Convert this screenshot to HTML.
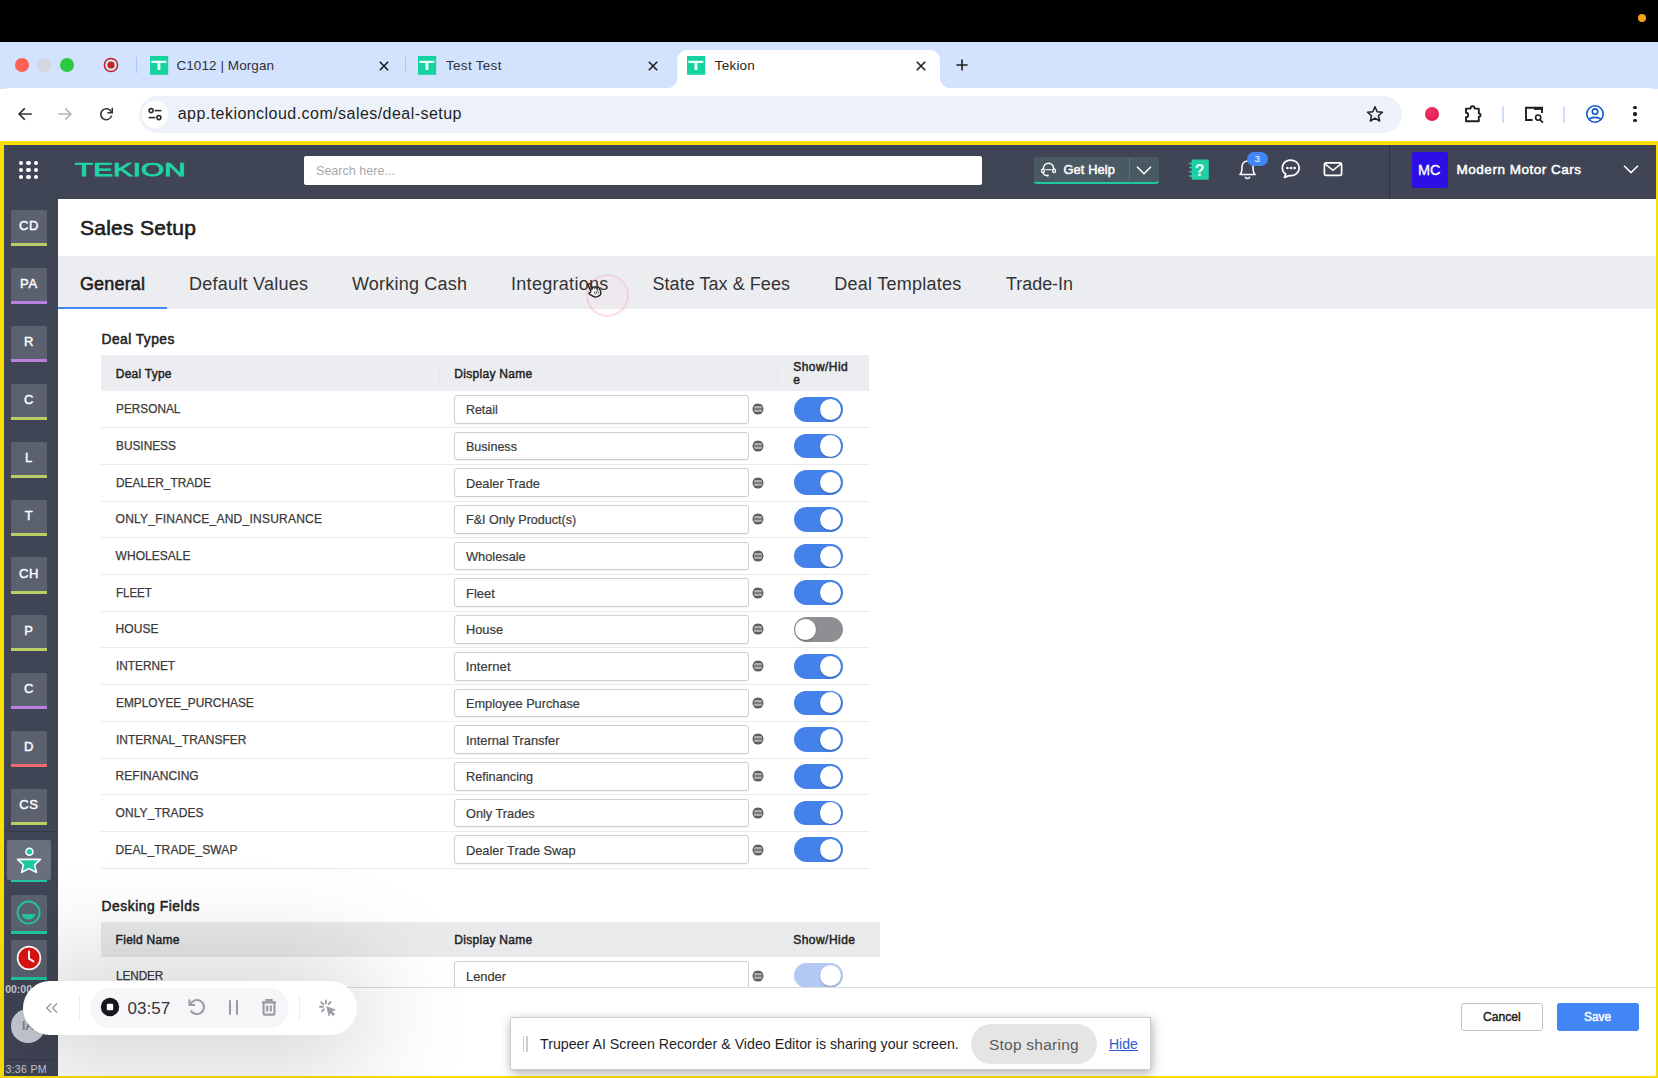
<!DOCTYPE html>
<html lang="en">
<head>
<meta charset="utf-8">
<title>Tekion</title>
<style>
html,body{margin:0;padding:0}
body{width:1658px;height:1078px;position:relative;overflow:hidden;background:#fff;font-family:"Liberation Sans",sans-serif;}
.a{position:absolute}
.t{position:absolute;white-space:pre;}
svg{position:absolute;overflow:visible}
</style>
</head>
<body>
<div class="a" style="left:0px;top:0px;width:1658px;height:42px;background:#000;"></div>
<div class="a" style="left:1638.2px;top:14px;width:8px;height:8px;border-radius:50%;background:#f5a21a"></div>
<div class="a" style="left:0px;top:42px;width:1658px;height:47px;background:#d3e3fd;"></div>
<div class="a" style="left:14.7px;top:58px;width:14px;height:14px;border-radius:50%;background:#fe5f57"></div>
<div class="a" style="left:37px;top:58px;width:14px;height:14px;border-radius:50%;background:#d4d8de"></div>
<div class="a" style="left:59.8px;top:58px;width:14px;height:14px;border-radius:50%;background:#2bc840"></div>
<svg style="left:102.7px;top:57px" width="16" height="16" viewBox="-8 -8 16 16"><circle r="6.6" fill="none" stroke="#c5221f" stroke-width="1.5"/><circle r="3.6" fill="#c5221f"/></svg>
<div class="a" style="left:136px;top:57px;width:1.4px;height:16px;background:#a8c7fa;"></div>
<div class="a" style="left:404.8px;top:57px;width:1.4px;height:16px;background:#a8c7fa;"></div>
<svg style="left:149.5px;top:56.3px" width="18.2" height="18.8" viewBox="0 0 18.2 18.8"><rect width="18.2" height="18.8" fill="#15d2a0"/><path d="M1.4 4.7h15v2.3H10.4V13.9H7.5V7H1.4z" fill="#eafff8"/></svg>
<svg style="left:418.2px;top:56.3px" width="18.2" height="18.8" viewBox="0 0 18.2 18.8"><rect width="18.2" height="18.8" fill="#15d2a0"/><path d="M1.4 4.7h15v2.3H10.4V13.9H7.5V7H1.4z" fill="#eafff8"/></svg>
<svg style="left:376px;top:57.7px" width="16" height="16" viewBox="-8 -8 16 16"><path d="M-4.2 -4.2L4.2 4.2M4.2 -4.2L-4.2 4.2" stroke="#1f1f1f" stroke-width="1.6" fill="none"/></svg>
<svg style="left:644.7px;top:57.7px" width="16" height="16" viewBox="-8 -8 16 16"><path d="M-4.2 -4.2L4.2 4.2M4.2 -4.2L-4.2 4.2" stroke="#1f1f1f" stroke-width="1.6" fill="none"/></svg>
<svg style="left:0;top:0" width="1658" height="90" viewBox="0 0 1658 90"><path d="M665.4 88.5 C672 88.5 677.4 84 677.4 78 V60 C677.4 54.5 681.9 50 687.4 50 H930 C935.5 50 940 54.5 940 60 V78 C940 84 945.4 88.5 952 88.5 Z" fill="#fff"/></svg>
<svg style="left:687.0px;top:56.3px" width="18.2" height="18.8" viewBox="0 0 18.2 18.8"><rect width="18.2" height="18.8" fill="#15d2a0"/><path d="M1.4 4.7h15v2.3H10.4V13.9H7.5V7H1.4z" fill="#eafff8"/></svg>
<svg style="left:913.3px;top:57.7px" width="16" height="16" viewBox="-8 -8 16 16"><path d="M-4.2 -4.2L4.2 4.2M4.2 -4.2L-4.2 4.2" stroke="#1f1f1f" stroke-width="1.6" fill="none"/></svg>
<svg style="left:954px;top:57px" width="16" height="16" viewBox="-8 -8 16 16"><path d="M-5.6 0H5.6M0 -5.6V5.6" stroke="#1f1f1f" stroke-width="1.6" fill="none"/></svg>
<div class="a" style="left:0px;top:88px;width:1658px;height:54px;background:#fff;border-radius:9px 9px 0 0"></div>
<div class="a" style="left:138.6px;top:95.8px;width:1263px;height:37.2px;background:#edf2fa;border-radius:19px"></div>
<div class="a" style="left:141.6px;top:101.2px;width:26.6px;height:26.6px;border-radius:50%;background:#fff"></div>
<svg style="left:15px;top:104px" width="20" height="20" viewBox="-10 -10 20 20"><path d="M6.8 0H-5.6M-0.2 -5.6L-5.9 0L-0.2 5.6" stroke="#333" stroke-width="1.7" fill="none" stroke-linejoin="miter"/></svg>
<svg style="left:55px;top:104px" width="20" height="20" viewBox="-10 -10 20 20"><path d="M-6.8 0H5.6M0.2 -5.6L5.9 0L0.2 5.6" stroke="#b4b8be" stroke-width="1.7" fill="none"/></svg>
<svg style="left:97.2px;top:104.8px" width="18.4" height="18.4" viewBox="-10 -10 20 20"><path d="M5.6 -2.4A6 6 0 1 0 5.9 1.6" stroke="#333" stroke-width="1.7" fill="none"/><path d="M6.6 -7V-1.6H1.2" stroke="#333" stroke-width="1.7" fill="none"/></svg>
<svg style="left:144.8px;top:104.2px" width="20" height="20" viewBox="-10 -10 20 20"><g stroke="#2e2e2e" stroke-width="1.6" fill="none"><circle cx="-3.9" cy="-3.4" r="2"/><path d="M-0.4 -3.4H6.4"/><circle cx="3.9" cy="3.6" r="2"/><path d="M-6.4 3.6H0.4"/></g></svg>
<svg style="left:1365px;top:103.6px" width="20" height="20" viewBox="-10 -10 20 20"><path d="M0 -7.2L2.15 -2.3L7.5 -1.8L3.45 1.75L4.65 7L0 4.2L-4.65 7L-3.45 1.75L-7.5 -1.8L-2.15 -2.3Z" stroke="#1f1f1f" stroke-width="1.5" fill="none" stroke-linejoin="round"/></svg>
<div class="a" style="left:1424.7px;top:107px;width:14px;height:14px;border-radius:50%;background:radial-gradient(circle at 40% 35%,#f0356a,#db1048)"></div>
<svg style="left:1463.3px;top:104px" width="20" height="20" viewBox="-10 -10 20 20"><path d="M-7 -5.4H-2.4A2 2.3 0 0 1 1.6 -5.4H5.8V-0.6A1.7 1.7 0 0 1 5.8 2.8V7.2H-7V3.2A2.2 2.2 0 0 0 -7 -1.2Z" stroke="#1f1f1f" stroke-width="1.9" fill="none" stroke-linejoin="round"/></svg>
<div class="a" style="left:1502.2px;top:105.5px;width:1.6px;height:17px;background:#d3dff6;"></div>
<svg style="left:1523.7px;top:104px" width="20" height="20" viewBox="-10 -10 20 20"><g stroke="#1f1f1f" fill="none"><path d="M-1.4 6H-8V-6.2H8V-1" stroke-width="1.9"/><path d="M0 -5.4H7.6" stroke-width="2.6"/><circle cx="4.2" cy="3.6" r="2.6" stroke-width="1.6"/><path d="M6.2 5.8L9 8.6" stroke-width="1.7"/></g></svg>
<div class="a" style="left:1563px;top:105.5px;width:1.6px;height:17px;background:#d3dff6;"></div>
<svg style="left:1584.5px;top:104px" width="20" height="20" viewBox="-10 -10 20 20"><g stroke="#0b57d0" stroke-width="1.6" fill="none"><circle r="8.2"/><circle cy="-2.4" r="2.7"/><path d="M-5.8 5.6C-4 2.6 4 2.6 5.8 5.6"/></g></svg>
<div class="a" style="left:1633.4px;top:106.10000000000001px;width:3.2px;height:3.2px;border-radius:50%;background:#1f1f1f"></div>
<div class="a" style="left:1633.4px;top:112.4px;width:3.2px;height:3.2px;border-radius:50%;background:#1f1f1f"></div>
<div class="a" style="left:1633.4px;top:118.7px;width:3.2px;height:3.2px;border-radius:50%;background:#1f1f1f"></div>
<div class="a" style="left:0px;top:140.6px;width:1658px;height:937.4px;background:#fbde08;"></div>
<div class="a" style="left:3.7px;top:145px;width:1651.9px;height:930.6px;background:#fff;"></div>
<div class="a" style="left:3.7px;top:145px;width:1651.9px;height:53.6px;background:#404556;"></div>
<div class="a" style="left:3.7px;top:198.6px;width:53.9px;height:877px;background:#404556;"></div>
<div class="a" style="left:19.099999999999998px;top:160.6px;width:4.4px;height:4.4px;border-radius:50%;background:#fff"></div>
<div class="a" style="left:19.099999999999998px;top:167.79999999999998px;width:4.4px;height:4.4px;border-radius:50%;background:#fff"></div>
<div class="a" style="left:19.099999999999998px;top:175.0px;width:4.4px;height:4.4px;border-radius:50%;background:#fff"></div>
<div class="a" style="left:26.299999999999997px;top:160.6px;width:4.4px;height:4.4px;border-radius:50%;background:#fff"></div>
<div class="a" style="left:26.299999999999997px;top:167.79999999999998px;width:4.4px;height:4.4px;border-radius:50%;background:#fff"></div>
<div class="a" style="left:26.299999999999997px;top:175.0px;width:4.4px;height:4.4px;border-radius:50%;background:#fff"></div>
<div class="a" style="left:33.5px;top:160.6px;width:4.4px;height:4.4px;border-radius:50%;background:#fff"></div>
<div class="a" style="left:33.5px;top:167.79999999999998px;width:4.4px;height:4.4px;border-radius:50%;background:#fff"></div>
<div class="a" style="left:33.5px;top:175.0px;width:4.4px;height:4.4px;border-radius:50%;background:#fff"></div>
<div class="a" style="left:304.3px;top:156px;width:677.3px;height:29px;background:#fff;border-radius:2px"></div>
<div class="a" style="left:1034px;top:157px;width:125px;height:27px;background:#4a5a62;border-radius:3px;border-bottom:2px solid #1fc8a0;box-sizing:border-box"></div>
<div class="a" style="left:1129.2px;top:158px;width:1px;height:23px;background:#5e6c73;"></div>
<svg style="left:1040.2px;top:160.8px" width="17" height="17" viewBox="-9 -9 18 18"><g stroke="#fff" stroke-width="1.5" fill="none"><path d="M-5.4 -0.6V-1.2A5.4 5.4 0 0 1 5.4 -1.2V-0.6"/><path d="M-5.6 3.4C-5.4 5.6 -4 6.4 -1.4 6.4"/><path d="M-3.4 0.2H3.4" stroke-width="1.1"/></g><ellipse cx="-5.9" cy="1.4" rx="2.2" ry="2.7" fill="#fff"/><ellipse cx="5.9" cy="1.4" rx="2.2" ry="2.7" fill="#fff"/><ellipse cx="-5.9" cy="1.4" rx="0.8" ry="1.2" fill="#4b5963"/><ellipse cx="5.9" cy="1.4" rx="0.8" ry="1.2" fill="#4b5963"/><circle cx="-0.8" cy="6.4" r="1.2" fill="#fff"/></svg>
<svg style="left:1136px;top:161.5px" width="16" height="16" viewBox="-8 -8 16 16"><path d="M-7 -3.2L0 3.7L7 -3.2" stroke="#fff" stroke-width="1.6" fill="none"/></svg>
<svg style="left:1187px;top:159px" width="23" height="22" viewBox="0 0 23 22"><rect x="4.6" y="0.4" width="17.2" height="20.4" rx="1.4" fill="#20cfa4"/><path d="M2 4.4H5M2 8.6H5M2 12.8H5M2 17H5" stroke="#20cfa4" stroke-width="1.5"/></svg>
<svg style="left:1236.8px;top:156.8px" width="21" height="23" viewBox="-11 -12 22 24"><g stroke="#fff" stroke-width="1.6" fill="none" stroke-linejoin="round"><path d="M-8 6.4C-5.6 4.6 -5.8 1 -5.8 -2A5.8 5.8 0 0 1 5.8 -2C5.8 1 5.6 4.6 8 6.4Z"/><path d="M-2.4 8.6A2.5 2.5 0 0 0 2.4 8.6"/></g></svg>
<div class="a" style="left:1247px;top:151.6px;width:20.6px;height:14.2px;background:#4285f4;border-radius:7.1px"></div>
<svg style="left:1279.5px;top:157.4px" width="22" height="22" viewBox="-11 -11 22 22"><path d="M-5.2 6.2A8.4 7.8 0 1 1 -1.6 7.6L-6.6 9.4Z" stroke="#fff" stroke-width="1.7" fill="none" stroke-linejoin="round"/><circle cx="-3.6" cy="0" r="1.35" fill="#fff"/><circle cx="0" cy="0" r="1.35" fill="#fff"/><circle cx="3.6" cy="0" r="1.35" fill="#fff"/></svg>
<svg style="left:1322.2px;top:157.8px" width="22" height="22" viewBox="-11 -11 22 22"><rect x="-8.6" y="-6.2" width="17.2" height="12.6" rx="1.6" stroke="#fff" stroke-width="1.7" fill="none"/><path d="M-8 -5.2L0 1.4L8 -5.2" stroke="#fff" stroke-width="1.5" fill="none"/></svg>
<div class="a" style="left:1389px;top:145px;width:1.2px;height:53.6px;background:#2f3342;"></div>
<div class="a" style="left:1411.5px;top:151.8px;width:36.4px;height:36px;background:#2c0fe6;border-radius:3px"></div>
<svg style="left:1622px;top:161px" width="18" height="16" viewBox="-9 -8 18 16"><path d="M-7 -3.2L0 3.6L7 -3.2" stroke="#fff" stroke-width="1.5" fill="none"/></svg>
<div class="a" style="left:10.7px;top:210.3px;width:36.2px;height:36.2px;background:#5c6170;border-bottom:3px solid #b9cf63;box-sizing:border-box;border-radius:2px 2px 0 0"></div>
<div class="a" style="left:10.7px;top:268.15000000000003px;width:36.2px;height:36.2px;background:#5c6170;border-bottom:3px solid #b981de;box-sizing:border-box;border-radius:2px 2px 0 0"></div>
<div class="a" style="left:10.7px;top:326.0px;width:36.2px;height:36.2px;background:#5c6170;border-bottom:3px solid #b981de;box-sizing:border-box;border-radius:2px 2px 0 0"></div>
<div class="a" style="left:10.7px;top:383.85px;width:36.2px;height:36.2px;background:#5c6170;border-bottom:3px solid #b9cf63;box-sizing:border-box;border-radius:2px 2px 0 0"></div>
<div class="a" style="left:10.7px;top:441.70000000000005px;width:36.2px;height:36.2px;background:#5c6170;border-bottom:3px solid #b9cf63;box-sizing:border-box;border-radius:2px 2px 0 0"></div>
<div class="a" style="left:10.7px;top:499.55px;width:36.2px;height:36.2px;background:#5c6170;border-bottom:3px solid #b9cf63;box-sizing:border-box;border-radius:2px 2px 0 0"></div>
<div class="a" style="left:10.7px;top:557.4000000000001px;width:36.2px;height:36.2px;background:#5c6170;border-bottom:3px solid #b9cf63;box-sizing:border-box;border-radius:2px 2px 0 0"></div>
<div class="a" style="left:10.7px;top:615.25px;width:36.2px;height:36.2px;background:#5c6170;border-bottom:3px solid #b9cf63;box-sizing:border-box;border-radius:2px 2px 0 0"></div>
<div class="a" style="left:10.7px;top:673.1px;width:36.2px;height:36.2px;background:#5c6170;border-bottom:3px solid #b981de;box-sizing:border-box;border-radius:2px 2px 0 0"></div>
<div class="a" style="left:10.7px;top:730.95px;width:36.2px;height:36.2px;background:#5c6170;border-bottom:3px solid #ee6a6e;box-sizing:border-box;border-radius:2px 2px 0 0"></div>
<div class="a" style="left:10.7px;top:788.8px;width:36.2px;height:36.2px;background:#5c6170;border-bottom:3px solid #b9cf63;box-sizing:border-box;border-radius:2px 2px 0 0"></div>
<div class="a" style="left:4px;top:830.5px;width:53.6px;height:1px;background:#353a49;"></div>
<div class="a" style="left:6.8px;top:840.3px;width:44.6px;height:39.6px;background:#6a6f7d;border-radius:2px"></div>
<div class="a" style="left:10.7px;top:880px;width:36.2px;height:2.2px;background:#1fc8a0;"></div>
<svg style="left:15.8px;top:846px" width="26" height="32" viewBox="-13 -20 26 32"><path d="M-11.4 -6.6L11.4 -6.6L5.6 -1.2L7.4 6.4L0 2.6L-7.4 6.4L-5.6 -1.2Z" fill="#1fc8a0" stroke="#fff" stroke-width="1.6" stroke-linejoin="round"/><circle cx="0.4" cy="-14.2" r="3.5" fill="#1fc8a0" stroke="#fff" stroke-width="1.5"/></svg>
<div class="a" style="left:10.7px;top:895.4px;width:36.2px;height:38.6px;background:#5c6170;border-bottom:3px solid #1fc8a0;box-sizing:border-box;border-radius:2px 2px 0 0"></div>
<svg style="left:15.1px;top:898.9px" width="27.2" height="27.2" viewBox="-13 -13 26 26"><circle r="10.6" fill="none" stroke="#1fc8a0" stroke-width="1.7"/><path d="M-6.4 1.4H6.4A6.4 5.2 0 0 1 -6.4 1.4Z" fill="#1fc8a0"/></svg>
<div class="a" style="left:10.7px;top:940.4px;width:36.2px;height:39.4px;background:#5c6170;border-bottom:3px solid #1fc8a0;box-sizing:border-box;border-radius:2px 2px 0 0"></div>
<svg style="left:15.7px;top:945px" width="26" height="26" viewBox="-13 -13 26 26"><circle r="11.4" fill="#e01313" stroke="#fff" stroke-width="1.7"/><path d="M0 -6.4V0.6L4.4 3.4" stroke="#fff" stroke-width="2" fill="none" stroke-linecap="round"/></svg>
<div class="a" style="left:11.2px;top:1009px;width:33.6px;height:33.6px;border-radius:50%;background:#c9cdd7"></div>
<div class="a" style="left:4px;top:1059px;width:53.6px;height:1px;background:#353a49;"></div>
<div class="a" style="left:57.6px;top:256.2px;width:1598px;height:52.6px;background:#ecedf1;"></div>
<div class="a" style="left:57.6px;top:306.6px;width:109.8px;height:2.9px;background:#4285f4;"></div>
<div class="a" style="left:101px;top:355.4px;width:768px;height:35.8px;background:#ecedf0;"></div>
<div class="a" style="left:438.6px;top:364px;width:1px;height:19px;background:#e5e6ea;"></div>
<div class="a" style="left:777.4px;top:364px;width:1px;height:19px;background:#e5e6ea;"></div>
<div class="a" style="left:101px;top:427.2px;width:768px;height:1px;background:#eaebed;"></div>
<div class="a" style="left:454.3px;top:394.90000000000003px;width:294.4px;height:28.8px;background:#fff;border:1px solid #cfcfcf;border-radius:3px;box-sizing:border-box;box-shadow:0 1px 1px rgba(0,0,0,.05)"></div>
<svg style="left:751.7px;top:403.1px" width="12" height="12" viewBox="-6 -6 12 12"><circle r="4.9" fill="#b2b2b2" stroke="#5c5c5c" stroke-width="1.2"/><path d="M-3.2 -3.7H3.2M-3.2 3.7H3.2" stroke="#5c5c5c" stroke-width="1.5" fill="none" stroke-linecap="round"/><path d="M-5 0H5" stroke="#555" stroke-width="1.1" fill="none"/><path d="M-4.4 -1.9H4.4M-4.4 1.9H4.4" stroke="#a2a2a2" stroke-width="0.6" fill="none"/></svg>
<div class="a" style="left:793.5px;top:396.90000000000003px;width:49.5px;height:24.8px;border-radius:12.4px;background:#4482ea"></div><div class="a" style="left:820.0px;top:398.70000000000005px;width:21.2px;height:21.2px;border-radius:50%;background:#fff;box-shadow:0 1px 2px rgba(0,0,0,.25)"></div>
<div class="a" style="left:101px;top:463.9px;width:768px;height:1px;background:#eaebed;"></div>
<div class="a" style="left:454.3px;top:431.6px;width:294.4px;height:28.8px;background:#fff;border:1px solid #cfcfcf;border-radius:3px;box-sizing:border-box;box-shadow:0 1px 1px rgba(0,0,0,.05)"></div>
<svg style="left:751.7px;top:439.8px" width="12" height="12" viewBox="-6 -6 12 12"><circle r="4.9" fill="#b2b2b2" stroke="#5c5c5c" stroke-width="1.2"/><path d="M-3.2 -3.7H3.2M-3.2 3.7H3.2" stroke="#5c5c5c" stroke-width="1.5" fill="none" stroke-linecap="round"/><path d="M-5 0H5" stroke="#555" stroke-width="1.1" fill="none"/><path d="M-4.4 -1.9H4.4M-4.4 1.9H4.4" stroke="#a2a2a2" stroke-width="0.6" fill="none"/></svg>
<div class="a" style="left:793.5px;top:433.6px;width:49.5px;height:24.8px;border-radius:12.4px;background:#4482ea"></div><div class="a" style="left:820.0px;top:435.40000000000003px;width:21.2px;height:21.2px;border-radius:50%;background:#fff;box-shadow:0 1px 2px rgba(0,0,0,.25)"></div>
<div class="a" style="left:101px;top:500.59999999999997px;width:768px;height:1px;background:#eaebed;"></div>
<div class="a" style="left:454.3px;top:468.3px;width:294.4px;height:28.8px;background:#fff;border:1px solid #cfcfcf;border-radius:3px;box-sizing:border-box;box-shadow:0 1px 1px rgba(0,0,0,.05)"></div>
<svg style="left:751.7px;top:476.5px" width="12" height="12" viewBox="-6 -6 12 12"><circle r="4.9" fill="#b2b2b2" stroke="#5c5c5c" stroke-width="1.2"/><path d="M-3.2 -3.7H3.2M-3.2 3.7H3.2" stroke="#5c5c5c" stroke-width="1.5" fill="none" stroke-linecap="round"/><path d="M-5 0H5" stroke="#555" stroke-width="1.1" fill="none"/><path d="M-4.4 -1.9H4.4M-4.4 1.9H4.4" stroke="#a2a2a2" stroke-width="0.6" fill="none"/></svg>
<div class="a" style="left:793.5px;top:470.3px;width:49.5px;height:24.8px;border-radius:12.4px;background:#4482ea"></div><div class="a" style="left:820.0px;top:472.1px;width:21.2px;height:21.2px;border-radius:50%;background:#fff;box-shadow:0 1px 2px rgba(0,0,0,.25)"></div>
<div class="a" style="left:101px;top:537.3000000000001px;width:768px;height:1px;background:#eaebed;"></div>
<div class="a" style="left:454.3px;top:505.00000000000006px;width:294.4px;height:28.8px;background:#fff;border:1px solid #cfcfcf;border-radius:3px;box-sizing:border-box;box-shadow:0 1px 1px rgba(0,0,0,.05)"></div>
<svg style="left:751.7px;top:513.2px" width="12" height="12" viewBox="-6 -6 12 12"><circle r="4.9" fill="#b2b2b2" stroke="#5c5c5c" stroke-width="1.2"/><path d="M-3.2 -3.7H3.2M-3.2 3.7H3.2" stroke="#5c5c5c" stroke-width="1.5" fill="none" stroke-linecap="round"/><path d="M-5 0H5" stroke="#555" stroke-width="1.1" fill="none"/><path d="M-4.4 -1.9H4.4M-4.4 1.9H4.4" stroke="#a2a2a2" stroke-width="0.6" fill="none"/></svg>
<div class="a" style="left:793.5px;top:507.00000000000006px;width:49.5px;height:24.8px;border-radius:12.4px;background:#4482ea"></div><div class="a" style="left:820.0px;top:508.80000000000007px;width:21.2px;height:21.2px;border-radius:50%;background:#fff;box-shadow:0 1px 2px rgba(0,0,0,.25)"></div>
<div class="a" style="left:101px;top:574.0000000000001px;width:768px;height:1px;background:#eaebed;"></div>
<div class="a" style="left:454.3px;top:541.7px;width:294.4px;height:28.8px;background:#fff;border:1px solid #cfcfcf;border-radius:3px;box-sizing:border-box;box-shadow:0 1px 1px rgba(0,0,0,.05)"></div>
<svg style="left:751.7px;top:549.9000000000001px" width="12" height="12" viewBox="-6 -6 12 12"><circle r="4.9" fill="#b2b2b2" stroke="#5c5c5c" stroke-width="1.2"/><path d="M-3.2 -3.7H3.2M-3.2 3.7H3.2" stroke="#5c5c5c" stroke-width="1.5" fill="none" stroke-linecap="round"/><path d="M-5 0H5" stroke="#555" stroke-width="1.1" fill="none"/><path d="M-4.4 -1.9H4.4M-4.4 1.9H4.4" stroke="#a2a2a2" stroke-width="0.6" fill="none"/></svg>
<div class="a" style="left:793.5px;top:543.7px;width:49.5px;height:24.8px;border-radius:12.4px;background:#4482ea"></div><div class="a" style="left:820.0px;top:545.5px;width:21.2px;height:21.2px;border-radius:50%;background:#fff;box-shadow:0 1px 2px rgba(0,0,0,.25)"></div>
<div class="a" style="left:101px;top:610.7px;width:768px;height:1px;background:#eaebed;"></div>
<div class="a" style="left:454.3px;top:578.4px;width:294.4px;height:28.8px;background:#fff;border:1px solid #cfcfcf;border-radius:3px;box-sizing:border-box;box-shadow:0 1px 1px rgba(0,0,0,.05)"></div>
<svg style="left:751.7px;top:586.6px" width="12" height="12" viewBox="-6 -6 12 12"><circle r="4.9" fill="#b2b2b2" stroke="#5c5c5c" stroke-width="1.2"/><path d="M-3.2 -3.7H3.2M-3.2 3.7H3.2" stroke="#5c5c5c" stroke-width="1.5" fill="none" stroke-linecap="round"/><path d="M-5 0H5" stroke="#555" stroke-width="1.1" fill="none"/><path d="M-4.4 -1.9H4.4M-4.4 1.9H4.4" stroke="#a2a2a2" stroke-width="0.6" fill="none"/></svg>
<div class="a" style="left:793.5px;top:580.4px;width:49.5px;height:24.8px;border-radius:12.4px;background:#4482ea"></div><div class="a" style="left:820.0px;top:582.1999999999999px;width:21.2px;height:21.2px;border-radius:50%;background:#fff;box-shadow:0 1px 2px rgba(0,0,0,.25)"></div>
<div class="a" style="left:101px;top:647.4000000000001px;width:768px;height:1px;background:#eaebed;"></div>
<div class="a" style="left:454.3px;top:615.1px;width:294.4px;height:28.8px;background:#fff;border:1px solid #cfcfcf;border-radius:3px;box-sizing:border-box;box-shadow:0 1px 1px rgba(0,0,0,.05)"></div>
<svg style="left:751.7px;top:623.3000000000001px" width="12" height="12" viewBox="-6 -6 12 12"><circle r="4.9" fill="#b2b2b2" stroke="#5c5c5c" stroke-width="1.2"/><path d="M-3.2 -3.7H3.2M-3.2 3.7H3.2" stroke="#5c5c5c" stroke-width="1.5" fill="none" stroke-linecap="round"/><path d="M-5 0H5" stroke="#555" stroke-width="1.1" fill="none"/><path d="M-4.4 -1.9H4.4M-4.4 1.9H4.4" stroke="#a2a2a2" stroke-width="0.6" fill="none"/></svg>
<div class="a" style="left:793.5px;top:617.1px;width:49.5px;height:24.8px;border-radius:12.4px;background:#8e8e93"></div><div class="a" style="left:795.3px;top:618.9px;width:21.2px;height:21.2px;border-radius:50%;background:#fff;box-shadow:0 1px 2px rgba(0,0,0,.25)"></div>
<div class="a" style="left:101px;top:684.1px;width:768px;height:1px;background:#eaebed;"></div>
<div class="a" style="left:454.3px;top:651.8px;width:294.4px;height:28.8px;background:#fff;border:1px solid #cfcfcf;border-radius:3px;box-sizing:border-box;box-shadow:0 1px 1px rgba(0,0,0,.05)"></div>
<svg style="left:751.7px;top:660.0px" width="12" height="12" viewBox="-6 -6 12 12"><circle r="4.9" fill="#b2b2b2" stroke="#5c5c5c" stroke-width="1.2"/><path d="M-3.2 -3.7H3.2M-3.2 3.7H3.2" stroke="#5c5c5c" stroke-width="1.5" fill="none" stroke-linecap="round"/><path d="M-5 0H5" stroke="#555" stroke-width="1.1" fill="none"/><path d="M-4.4 -1.9H4.4M-4.4 1.9H4.4" stroke="#a2a2a2" stroke-width="0.6" fill="none"/></svg>
<div class="a" style="left:793.5px;top:653.8px;width:49.5px;height:24.8px;border-radius:12.4px;background:#4482ea"></div><div class="a" style="left:820.0px;top:655.5999999999999px;width:21.2px;height:21.2px;border-radius:50%;background:#fff;box-shadow:0 1px 2px rgba(0,0,0,.25)"></div>
<div class="a" style="left:101px;top:720.8000000000001px;width:768px;height:1px;background:#eaebed;"></div>
<div class="a" style="left:454.3px;top:688.5px;width:294.4px;height:28.8px;background:#fff;border:1px solid #cfcfcf;border-radius:3px;box-sizing:border-box;box-shadow:0 1px 1px rgba(0,0,0,.05)"></div>
<svg style="left:751.7px;top:696.7px" width="12" height="12" viewBox="-6 -6 12 12"><circle r="4.9" fill="#b2b2b2" stroke="#5c5c5c" stroke-width="1.2"/><path d="M-3.2 -3.7H3.2M-3.2 3.7H3.2" stroke="#5c5c5c" stroke-width="1.5" fill="none" stroke-linecap="round"/><path d="M-5 0H5" stroke="#555" stroke-width="1.1" fill="none"/><path d="M-4.4 -1.9H4.4M-4.4 1.9H4.4" stroke="#a2a2a2" stroke-width="0.6" fill="none"/></svg>
<div class="a" style="left:793.5px;top:690.5px;width:49.5px;height:24.8px;border-radius:12.4px;background:#4482ea"></div><div class="a" style="left:820.0px;top:692.3px;width:21.2px;height:21.2px;border-radius:50%;background:#fff;box-shadow:0 1px 2px rgba(0,0,0,.25)"></div>
<div class="a" style="left:101px;top:757.5000000000001px;width:768px;height:1px;background:#eaebed;"></div>
<div class="a" style="left:454.3px;top:725.2px;width:294.4px;height:28.8px;background:#fff;border:1px solid #cfcfcf;border-radius:3px;box-sizing:border-box;box-shadow:0 1px 1px rgba(0,0,0,.05)"></div>
<svg style="left:751.7px;top:733.4000000000001px" width="12" height="12" viewBox="-6 -6 12 12"><circle r="4.9" fill="#b2b2b2" stroke="#5c5c5c" stroke-width="1.2"/><path d="M-3.2 -3.7H3.2M-3.2 3.7H3.2" stroke="#5c5c5c" stroke-width="1.5" fill="none" stroke-linecap="round"/><path d="M-5 0H5" stroke="#555" stroke-width="1.1" fill="none"/><path d="M-4.4 -1.9H4.4M-4.4 1.9H4.4" stroke="#a2a2a2" stroke-width="0.6" fill="none"/></svg>
<div class="a" style="left:793.5px;top:727.2px;width:49.5px;height:24.8px;border-radius:12.4px;background:#4482ea"></div><div class="a" style="left:820.0px;top:729.0px;width:21.2px;height:21.2px;border-radius:50%;background:#fff;box-shadow:0 1px 2px rgba(0,0,0,.25)"></div>
<div class="a" style="left:101px;top:794.2px;width:768px;height:1px;background:#eaebed;"></div>
<div class="a" style="left:454.3px;top:761.9px;width:294.4px;height:28.8px;background:#fff;border:1px solid #cfcfcf;border-radius:3px;box-sizing:border-box;box-shadow:0 1px 1px rgba(0,0,0,.05)"></div>
<svg style="left:751.7px;top:770.1px" width="12" height="12" viewBox="-6 -6 12 12"><circle r="4.9" fill="#b2b2b2" stroke="#5c5c5c" stroke-width="1.2"/><path d="M-3.2 -3.7H3.2M-3.2 3.7H3.2" stroke="#5c5c5c" stroke-width="1.5" fill="none" stroke-linecap="round"/><path d="M-5 0H5" stroke="#555" stroke-width="1.1" fill="none"/><path d="M-4.4 -1.9H4.4M-4.4 1.9H4.4" stroke="#a2a2a2" stroke-width="0.6" fill="none"/></svg>
<div class="a" style="left:793.5px;top:763.9px;width:49.5px;height:24.8px;border-radius:12.4px;background:#4482ea"></div><div class="a" style="left:820.0px;top:765.6999999999999px;width:21.2px;height:21.2px;border-radius:50%;background:#fff;box-shadow:0 1px 2px rgba(0,0,0,.25)"></div>
<div class="a" style="left:101px;top:830.9000000000001px;width:768px;height:1px;background:#eaebed;"></div>
<div class="a" style="left:454.3px;top:798.6px;width:294.4px;height:28.8px;background:#fff;border:1px solid #cfcfcf;border-radius:3px;box-sizing:border-box;box-shadow:0 1px 1px rgba(0,0,0,.05)"></div>
<svg style="left:751.7px;top:806.8000000000001px" width="12" height="12" viewBox="-6 -6 12 12"><circle r="4.9" fill="#b2b2b2" stroke="#5c5c5c" stroke-width="1.2"/><path d="M-3.2 -3.7H3.2M-3.2 3.7H3.2" stroke="#5c5c5c" stroke-width="1.5" fill="none" stroke-linecap="round"/><path d="M-5 0H5" stroke="#555" stroke-width="1.1" fill="none"/><path d="M-4.4 -1.9H4.4M-4.4 1.9H4.4" stroke="#a2a2a2" stroke-width="0.6" fill="none"/></svg>
<div class="a" style="left:793.5px;top:800.6px;width:49.5px;height:24.8px;border-radius:12.4px;background:#4482ea"></div><div class="a" style="left:820.0px;top:802.4px;width:21.2px;height:21.2px;border-radius:50%;background:#fff;box-shadow:0 1px 2px rgba(0,0,0,.25)"></div>
<div class="a" style="left:101px;top:867.6px;width:768px;height:1px;background:#eaebed;"></div>
<div class="a" style="left:454.3px;top:835.3px;width:294.4px;height:28.8px;background:#fff;border:1px solid #cfcfcf;border-radius:3px;box-sizing:border-box;box-shadow:0 1px 1px rgba(0,0,0,.05)"></div>
<svg style="left:751.7px;top:843.5px" width="12" height="12" viewBox="-6 -6 12 12"><circle r="4.9" fill="#b2b2b2" stroke="#5c5c5c" stroke-width="1.2"/><path d="M-3.2 -3.7H3.2M-3.2 3.7H3.2" stroke="#5c5c5c" stroke-width="1.5" fill="none" stroke-linecap="round"/><path d="M-5 0H5" stroke="#555" stroke-width="1.1" fill="none"/><path d="M-4.4 -1.9H4.4M-4.4 1.9H4.4" stroke="#a2a2a2" stroke-width="0.6" fill="none"/></svg>
<div class="a" style="left:793.5px;top:837.3px;width:49.5px;height:24.8px;border-radius:12.4px;background:#4482ea"></div><div class="a" style="left:820.0px;top:839.0999999999999px;width:21.2px;height:21.2px;border-radius:50%;background:#fff;box-shadow:0 1px 2px rgba(0,0,0,.25)"></div>
<div class="a" style="left:101px;top:922.4px;width:778.6px;height:34.8px;background:#e9eaec;"></div>
<div class="a" style="left:438.6px;top:930.5px;width:1px;height:19px;background:#e5e6ea;"></div>
<div class="a" style="left:777.4px;top:930.5px;width:1px;height:19px;background:#e5e6ea;"></div>
<div class="a" style="left:454.3px;top:960.8px;width:294.4px;height:28.8px;background:#fff;border:1px solid #cfcfcf;border-radius:3px;box-sizing:border-box"></div>
<svg style="left:751.7px;top:969.6px" width="12" height="12" viewBox="-6 -6 12 12"><circle r="4.9" fill="#b2b2b2" stroke="#5c5c5c" stroke-width="1.2"/><path d="M-3.2 -3.7H3.2M-3.2 3.7H3.2" stroke="#5c5c5c" stroke-width="1.5" fill="none" stroke-linecap="round"/><path d="M-5 0H5" stroke="#555" stroke-width="1.1" fill="none"/><path d="M-4.4 -1.9H4.4M-4.4 1.9H4.4" stroke="#a2a2a2" stroke-width="0.6" fill="none"/></svg>
<div class="a" style="left:793.5px;top:963.2px;width:49.5px;height:24.8px;border-radius:12.4px;background:#b4c8f5"></div><div class="a" style="left:820.0px;top:965.0px;width:21.2px;height:21.2px;border-radius:50%;background:#fff;box-shadow:0 1px 2px rgba(0,0,0,.25)"></div>
<div class="a" style="left:57.6px;top:987.4px;width:1598px;height:88.2px;background:#fff;border-top:1px solid #dcdde0;box-sizing:border-box"></div>
<div class="a" style="left:1461.2px;top:1002.6px;width:81.6px;height:28.8px;background:#fff;border:1px solid #c4c4c4;border-radius:3px;box-sizing:border-box"></div>
<div class="a" style="left:1557px;top:1002.6px;width:81.6px;height:28.8px;background:#4285f4;border-radius:3px"></div>
<div class="a" style="left:586.2px;top:274.2px;width:42.8px;height:42.8px;border-radius:50%;background:rgba(255,190,205,.07);border:2.4px solid rgba(245,170,192,.36);box-sizing:border-box"></div>
<svg style="left:586.2px;top:281.2px;transform:rotate(-24deg);transform-origin:50% 50%" width="16" height="18" viewBox="0 0 18 20"><path d="M5.2 10V2.8A1.4 1.4 0 0 1 8 2.8V8L8.2 7.2A1.25 1.25 0 0 1 10.6 7.4V8.4A1.25 1.25 0 0 1 13 8.4V9.4A1.15 1.15 0 0 1 15.2 9.6V13.4C15.2 16.6 13.6 18.4 10.8 18.4H9.4C7.4 18.4 6.2 17.6 5 15.8L2.4 12.2C1.8 11.2 3 10 4 10.8Z" fill="#f3f3f5" stroke="#1c1c1c" stroke-width="1.5" stroke-linejoin="round"/><path d="M8.4 12V15.4M10.4 12V15.4M12.4 12V15.4" stroke="#444" stroke-width="0.9"/></svg>

<span class="t" style="left:176.4px;top:56.5px;line-height:18px;font-size:13.5px;font-weight:400;color:#303237;letter-spacing:0.079px;">C1012 | Morgan</span>
<span class="t" style="left:446.0px;top:56.5px;line-height:18px;font-size:13.5px;font-weight:400;color:#303237;letter-spacing:0.296px;">Test Test</span>
<span class="t" style="left:714.8px;top:56.5px;line-height:18px;font-size:13.5px;font-weight:400;color:#1f1f1f;letter-spacing:0.194px;">Tekion</span>
<span class="t" style="left:177.7px;top:103.1px;line-height:21px;font-size:16px;font-weight:400;color:#1f1f1f;letter-spacing:0.459px;">app.tekioncloud.com/sales/deal-setup</span>
<span class="t" style="left:75.0px;top:158.9px;line-height:23px;font-size:17.5px;font-weight:400;color:#1fd3a5;transform-origin:0 50%;transform:scaleX(1.7);letter-spacing:0px;-webkit-text-stroke:0.75px #1fd3a5;">TEKION</span>
<span class="t" style="left:315.7px;top:161.7px;line-height:17px;font-size:13px;font-weight:400;color:#a9a9a9;transform-origin:0 50%;transform:scaleX(0.9662);">Search here...</span>
<span class="t" style="left:1063.4px;top:161.1px;line-height:17px;font-size:12.8px;font-weight:400;color:#fff;letter-spacing:0.141px;-webkit-text-stroke:0.5px;">Get Help</span>
<span class="t" style="left:1099.6px;width:200px;text-align:center;top:159.9px;line-height:21px;font-size:16px;font-weight:700;color:#f2fffb;">?</span>
<span class="t" style="left:1157.3px;width:200px;text-align:center;top:152.8px;line-height:12px;font-size:9.5px;font-weight:400;color:#fff;">3</span>
<span class="t" style="left:1418.3px;top:159.8px;line-height:20px;font-size:15.5px;font-weight:400;color:#fff;transform-origin:0 50%;transform:scaleX(0.9291);-webkit-text-stroke:0.35px;">MC</span>
<span class="t" style="left:1456.6px;top:160.6px;line-height:18px;font-size:13.5px;font-weight:400;color:#fff;letter-spacing:0.506px;-webkit-text-stroke:0.5px;">Modern Motor Cars</span>
<span class="t" style="left:-71.7px;width:200px;text-align:center;top:217.4px;line-height:17px;font-size:13px;font-weight:400;color:#fff;-webkit-text-stroke:0.4px;letter-spacing:0.7px;padding-left:0.7px;">CD</span>
<span class="t" style="left:-71.7px;width:200px;text-align:center;top:275.3px;line-height:17px;font-size:13px;font-weight:400;color:#fff;-webkit-text-stroke:0.4px;letter-spacing:0.7px;padding-left:0.7px;">PA</span>
<span class="t" style="left:-71.7px;width:200px;text-align:center;top:333.1px;line-height:17px;font-size:13px;font-weight:400;color:#fff;-webkit-text-stroke:0.4px;letter-spacing:0.7px;padding-left:0.7px;">R</span>
<span class="t" style="left:-71.7px;width:200px;text-align:center;top:391.0px;line-height:17px;font-size:13px;font-weight:400;color:#fff;-webkit-text-stroke:0.4px;letter-spacing:0.7px;padding-left:0.7px;">C</span>
<span class="t" style="left:-71.7px;width:200px;text-align:center;top:448.8px;line-height:17px;font-size:13px;font-weight:400;color:#fff;-webkit-text-stroke:0.4px;letter-spacing:0.7px;padding-left:0.7px;">L</span>
<span class="t" style="left:-71.7px;width:200px;text-align:center;top:506.6px;line-height:17px;font-size:13px;font-weight:400;color:#fff;-webkit-text-stroke:0.4px;letter-spacing:0.7px;padding-left:0.7px;">T</span>
<span class="t" style="left:-71.7px;width:200px;text-align:center;top:564.5px;line-height:17px;font-size:13px;font-weight:400;color:#fff;-webkit-text-stroke:0.4px;letter-spacing:0.7px;padding-left:0.7px;">CH</span>
<span class="t" style="left:-71.7px;width:200px;text-align:center;top:622.4px;line-height:17px;font-size:13px;font-weight:400;color:#fff;-webkit-text-stroke:0.4px;letter-spacing:0.7px;padding-left:0.7px;">P</span>
<span class="t" style="left:-71.7px;width:200px;text-align:center;top:680.2px;line-height:17px;font-size:13px;font-weight:400;color:#fff;-webkit-text-stroke:0.4px;letter-spacing:0.7px;padding-left:0.7px;">C</span>
<span class="t" style="left:-71.7px;width:200px;text-align:center;top:738.1px;line-height:17px;font-size:13px;font-weight:400;color:#fff;-webkit-text-stroke:0.4px;letter-spacing:0.7px;padding-left:0.7px;">D</span>
<span class="t" style="left:-71.7px;width:200px;text-align:center;top:795.9px;line-height:17px;font-size:13px;font-weight:400;color:#fff;-webkit-text-stroke:0.4px;letter-spacing:0.7px;padding-left:0.7px;">CS</span>
<span class="t" style="left:5.2px;top:982.2px;line-height:14px;font-size:10.5px;font-weight:700;color:#c9ccd4;">00:00</span>
<span class="t" style="left:-72.0px;width:200px;text-align:center;top:1017.8px;line-height:16px;font-size:12px;font-weight:700;color:#7d8290;">IA</span>
<span class="t" style="left:5.4px;top:1062.4px;line-height:14px;font-size:10.5px;font-weight:400;color:#c9ccd4;letter-spacing:0.348px;">3:36 PM</span>
<span class="t" style="left:79.9px;top:213.7px;line-height:27px;font-size:21px;font-weight:400;color:#1e1e1e;letter-spacing:0.285px;-webkit-text-stroke:0.62px;">Sales Setup</span>
<span class="t" style="left:79.9px;top:272.7px;line-height:23px;font-size:18px;font-weight:400;color:#1e1e1e;letter-spacing:0.176px;-webkit-text-stroke:0.55px;">General</span>
<span class="t" style="left:189.0px;top:272.7px;line-height:23px;font-size:18px;font-weight:400;color:#333;letter-spacing:0.244px;">Default Values</span>
<span class="t" style="left:352.0px;top:272.7px;line-height:23px;font-size:18px;font-weight:400;color:#333;letter-spacing:0.207px;">Working Cash</span>
<span class="t" style="left:511.0px;top:272.7px;line-height:23px;font-size:18px;font-weight:400;color:#333;letter-spacing:0.294px;">Integrations</span>
<span class="t" style="left:652.5px;top:272.7px;line-height:23px;font-size:18px;font-weight:400;color:#333;letter-spacing:0.050px;">State Tax &amp; Fees</span>
<span class="t" style="left:834.2px;top:272.7px;line-height:23px;font-size:18px;font-weight:400;color:#333;letter-spacing:0.251px;">Deal Templates</span>
<span class="t" style="left:1005.7px;top:272.7px;line-height:23px;font-size:18px;font-weight:400;color:#333;transform-origin:0 50%;transform:scaleX(0.9947);">Trade-In</span>
<span class="t" style="left:101.6px;top:330.8px;line-height:18px;font-size:13.8px;font-weight:400;color:#222;letter-spacing:0.435px;-webkit-text-stroke:0.5px;">Deal Types</span>
<span class="t" style="left:115.8px;top:365.9px;line-height:16px;font-size:12px;font-weight:400;color:#222;letter-spacing:0.236px;-webkit-text-stroke:0.45px;">Deal Type</span>
<span class="t" style="left:454.3px;top:365.9px;line-height:16px;font-size:12px;font-weight:400;color:#222;letter-spacing:0.291px;-webkit-text-stroke:0.45px;">Display Name</span>
<span class="t" style="left:793.2px;top:358.8px;line-height:16px;font-size:12px;font-weight:400;color:#222;letter-spacing:0.463px;-webkit-text-stroke:0.45px;">Show/Hid</span>
<span class="t" style="left:793.2px;top:372.2px;line-height:16px;font-size:12px;font-weight:400;color:#222;-webkit-text-stroke:0.45px;">e</span>
<span class="t" style="left:115.6px;top:401.2px;line-height:16px;font-size:12px;font-weight:400;color:#3a3a3a;transform-origin:0 50%;transform:scaleX(0.9853);-webkit-text-stroke:0.25px #3a3a3a;">PERSONAL</span>
<span class="t" style="left:465.8px;top:401.2px;line-height:17px;font-size:13px;font-weight:400;color:#3a3a3a;transform-origin:0 50%;transform:scaleX(0.9534);-webkit-text-stroke:0.2px #3a3a3a;">Retail</span>
<span class="t" style="left:115.6px;top:437.9px;line-height:16px;font-size:12px;font-weight:400;color:#3a3a3a;transform-origin:0 50%;transform:scaleX(0.9870);-webkit-text-stroke:0.25px #3a3a3a;">BUSINESS</span>
<span class="t" style="left:465.8px;top:437.9px;line-height:17px;font-size:13px;font-weight:400;color:#3a3a3a;transform-origin:0 50%;transform:scaleX(0.9649);-webkit-text-stroke:0.2px #3a3a3a;">Business</span>
<span class="t" style="left:115.6px;top:474.6px;line-height:16px;font-size:12px;font-weight:400;color:#3a3a3a;transform-origin:0 50%;transform:scaleX(0.9950);-webkit-text-stroke:0.25px #3a3a3a;">DEALER_TRADE</span>
<span class="t" style="left:465.8px;top:474.6px;line-height:17px;font-size:13px;font-weight:400;color:#3a3a3a;transform-origin:0 50%;transform:scaleX(0.9833);-webkit-text-stroke:0.2px #3a3a3a;">Dealer Trade</span>
<span class="t" style="left:115.6px;top:511.3px;line-height:16px;font-size:12px;font-weight:400;color:#3a3a3a;letter-spacing:0.236px;-webkit-text-stroke:0.25px #3a3a3a;">ONLY_FINANCE_AND_INSURANCE</span>
<span class="t" style="left:465.8px;top:511.3px;line-height:17px;font-size:13px;font-weight:400;color:#3a3a3a;transform-origin:0 50%;transform:scaleX(0.9655);-webkit-text-stroke:0.2px #3a3a3a;">F&amp;I Only Product(s)</span>
<span class="t" style="left:115.6px;top:548.0px;line-height:16px;font-size:12px;font-weight:400;color:#3a3a3a;letter-spacing:0.037px;-webkit-text-stroke:0.25px #3a3a3a;">WHOLESALE</span>
<span class="t" style="left:465.8px;top:548.0px;line-height:17px;font-size:13px;font-weight:400;color:#3a3a3a;transform-origin:0 50%;transform:scaleX(0.9835);-webkit-text-stroke:0.2px #3a3a3a;">Wholesale</span>
<span class="t" style="left:115.6px;top:584.7px;line-height:16px;font-size:12px;font-weight:400;color:#3a3a3a;transform-origin:0 50%;transform:scaleX(0.9587);-webkit-text-stroke:0.25px #3a3a3a;">FLEET</span>
<span class="t" style="left:465.8px;top:584.7px;line-height:17px;font-size:13px;font-weight:400;color:#3a3a3a;transform-origin:0 50%;transform:scaleX(0.9963);-webkit-text-stroke:0.2px #3a3a3a;">Fleet</span>
<span class="t" style="left:115.6px;top:621.4px;line-height:16px;font-size:12px;font-weight:400;color:#3a3a3a;letter-spacing:0.078px;-webkit-text-stroke:0.25px #3a3a3a;">HOUSE</span>
<span class="t" style="left:465.8px;top:621.4px;line-height:17px;font-size:13px;font-weight:400;color:#3a3a3a;transform-origin:0 50%;transform:scaleX(0.9846);-webkit-text-stroke:0.2px #3a3a3a;">House</span>
<span class="t" style="left:115.6px;top:658.1px;line-height:16px;font-size:12px;font-weight:400;color:#3a3a3a;transform-origin:0 50%;transform:scaleX(0.9833);-webkit-text-stroke:0.25px #3a3a3a;">INTERNET</span>
<span class="t" style="left:465.8px;top:658.1px;line-height:17px;font-size:13px;font-weight:400;color:#3a3a3a;letter-spacing:0.087px;-webkit-text-stroke:0.2px #3a3a3a;">Internet</span>
<span class="t" style="left:115.6px;top:694.8px;line-height:16px;font-size:12px;font-weight:400;color:#3a3a3a;transform-origin:0 50%;transform:scaleX(0.9879);-webkit-text-stroke:0.25px #3a3a3a;">EMPLOYEE_PURCHASE</span>
<span class="t" style="left:465.8px;top:694.8px;line-height:17px;font-size:13px;font-weight:400;color:#3a3a3a;transform-origin:0 50%;transform:scaleX(0.9790);-webkit-text-stroke:0.2px #3a3a3a;">Employee Purchase</span>
<span class="t" style="left:115.6px;top:731.5px;line-height:16px;font-size:12px;font-weight:400;color:#3a3a3a;transform-origin:0 50%;transform:scaleX(0.9978);-webkit-text-stroke:0.25px #3a3a3a;">INTERNAL_TRANSFER</span>
<span class="t" style="left:465.8px;top:731.5px;line-height:17px;font-size:13px;font-weight:400;color:#3a3a3a;transform-origin:0 50%;transform:scaleX(0.9878);-webkit-text-stroke:0.2px #3a3a3a;">Internal Transfer</span>
<span class="t" style="left:115.6px;top:768.2px;line-height:16px;font-size:12px;font-weight:400;color:#3a3a3a;letter-spacing:0.043px;-webkit-text-stroke:0.25px #3a3a3a;">REFINANCING</span>
<span class="t" style="left:465.8px;top:768.2px;line-height:17px;font-size:13px;font-weight:400;color:#3a3a3a;transform-origin:0 50%;transform:scaleX(0.9773);-webkit-text-stroke:0.2px #3a3a3a;">Refinancing</span>
<span class="t" style="left:115.6px;top:804.9px;line-height:16px;font-size:12px;font-weight:400;color:#3a3a3a;letter-spacing:0.076px;-webkit-text-stroke:0.25px #3a3a3a;">ONLY_TRADES</span>
<span class="t" style="left:465.8px;top:804.9px;line-height:17px;font-size:13px;font-weight:400;color:#3a3a3a;transform-origin:0 50%;transform:scaleX(0.9801);-webkit-text-stroke:0.2px #3a3a3a;">Only Trades</span>
<span class="t" style="left:115.6px;top:841.6px;line-height:16px;font-size:12px;font-weight:400;color:#3a3a3a;letter-spacing:0.110px;-webkit-text-stroke:0.25px #3a3a3a;">DEAL_TRADE_SWAP</span>
<span class="t" style="left:465.8px;top:841.6px;line-height:17px;font-size:13px;font-weight:400;color:#3a3a3a;transform-origin:0 50%;transform:scaleX(0.9849);-webkit-text-stroke:0.2px #3a3a3a;">Dealer Trade Swap</span>
<span class="t" style="left:101.5px;top:897.7px;line-height:18px;font-size:13.8px;font-weight:400;color:#222;letter-spacing:0.570px;-webkit-text-stroke:0.5px;">Desking Fields</span>
<span class="t" style="left:115.6px;top:931.8px;line-height:16px;font-size:12px;font-weight:400;color:#222;letter-spacing:0.271px;-webkit-text-stroke:0.45px;">Field Name</span>
<span class="t" style="left:454.3px;top:931.8px;line-height:16px;font-size:12px;font-weight:400;color:#222;letter-spacing:0.291px;-webkit-text-stroke:0.45px;">Display Name</span>
<span class="t" style="left:793.2px;top:931.8px;line-height:16px;font-size:12px;font-weight:400;color:#222;letter-spacing:0.471px;-webkit-text-stroke:0.45px;">Show/Hide</span>
<span class="t" style="left:115.6px;top:967.6px;line-height:16px;font-size:12px;font-weight:400;color:#3a3a3a;transform-origin:0 50%;transform:scaleX(0.9715);-webkit-text-stroke:0.25px #3a3a3a;">LENDER</span>
<span class="t" style="left:465.8px;top:967.6px;line-height:17px;font-size:13px;font-weight:400;color:#3a3a3a;transform-origin:0 50%;transform:scaleX(0.9856);-webkit-text-stroke:0.2px #3a3a3a;">Lender</span>
<span class="t" style="left:1483.0px;top:1007.8px;line-height:17px;font-size:13px;font-weight:400;color:#222;transform-origin:0 50%;transform:scaleX(0.9316);-webkit-text-stroke:0.45px;">Cancel</span>
<span class="t" style="left:1584.0px;top:1007.8px;line-height:17px;font-size:13px;font-weight:400;color:#fff;transform-origin:0 50%;transform:scaleX(0.9109);-webkit-text-stroke:0.45px;">Save</span>

<div class="a" style="left:509.8px;top:1016.8px;width:641.2px;height:53.4px;background:#fff;border:1px solid #cdcdcd;box-sizing:border-box;box-shadow:1px 3px 10px rgba(0,0,0,.32)"></div>
<div class="a" style="left:522.8px;top:1035.5px;width:1.4px;height:16px;background:#cdcdcd;"></div>
<div class="a" style="left:526.4px;top:1035.5px;width:1.4px;height:16px;background:#cdcdcd;"></div>
<div class="a" style="left:971.2px;top:1024px;width:125.8px;height:40.2px;background:#e5e5e5;border-radius:20.1px"></div>
<div class="a" style="left:1109.2px;top:1050.2px;width:28.8px;height:1px;background:#2a5bd7;"></div>
<div class="a" style="left:22.8px;top:980.6px;width:334px;height:54px;background:#fff;border-radius:27px;box-shadow:0 5px 110px 10px rgba(0,0,0,.25)"></div>
<div class="a" style="left:90px;top:988px;width:199px;height:39.6px;background:#f6f6f8;border-radius:19.8px"></div>
<div class="a" style="left:78.8px;top:995px;width:1px;height:26px;background:#ebebee;"></div>
<div class="a" style="left:299.2px;top:995px;width:1px;height:26px;background:#ebebee;"></div>
<svg style="left:44px;top:1000px" width="16" height="16" viewBox="-8 -8 16 16"><path d="M-0.8 -4.4L-5.2 0L-0.8 4.4M5 -4.4L0.6 0L5 4.4" stroke="#9a9aa2" stroke-width="1.4" fill="none"/></svg>
<svg style="left:99.5px;top:997.3px" width="20" height="20" viewBox="-10 -10 20 20"><circle r="9.2" fill="#16161d"/><rect x="-3.2" y="-3.2" width="6.4" height="6.4" rx="1.2" fill="#fff"/></svg>
<svg style="left:187px;top:997.3px" width="20" height="20" viewBox="-10 -10 20 20"><path d="M-6.7 -2.2A7 7 0 1 1 -6.2 3.4" stroke="#9a9aa2" stroke-width="2" fill="none"/><path d="M-7.6 -7.6V-2H-2" stroke="#9a9aa2" stroke-width="2" fill="none"/></svg>
<div class="a" style="left:228.8px;top:1000px;width:2.7px;height:14.6px;background:#9a9aa2;border-radius:1.3px"></div>
<div class="a" style="left:235.8px;top:1000px;width:2.7px;height:14.6px;background:#9a9aa2;border-radius:1.3px"></div>
<svg style="left:259.4px;top:997.3px" width="20" height="20" viewBox="-10 -10 20 20"><g stroke="#9a9aa2" stroke-width="2.1" fill="none"><path d="M-7 -4.6H7M-2.6 -4.6V-7H2.6V-4.6M-5.4 -4.6V6.4A1.2 1.2 0 0 0 -4.2 7.6H4.2A1.2 1.2 0 0 0 5.4 6.4V-4.6"/><path d="M-1.8 -1.4V4.6M1.8 -1.4V4.6"/></g></svg>
<svg style="left:318.8px;top:998.6px" width="18" height="18" viewBox="-10 -10 20 20"><path d="M-1.4 -1.4L8 2L4.2 3.8L7.4 7L5.8 8.6L2.6 5.4L1 9Z" fill="#9a9aa2" stroke="#9a9aa2" stroke-width="0.8" stroke-linejoin="round"/><path d="M-2.4 -8.4V-5M-7.6 -6.6L-5.2 -4.2M-9 -1.4H-5.6M-6.8 3.6L-4.6 1.4M2.8 -6.6L0.8 -4.4" stroke="#9a9aa2" stroke-width="2" fill="none" stroke-linecap="round"/></svg>
<span class="t" style="left:539.8px;top:1034.9px;line-height:19px;font-size:14.5px;font-weight:400;color:#1f1f1f;transform-origin:0 50%;transform:scaleX(0.9804);">Trupeer AI Screen Recorder &amp; Video Editor is sharing your screen.</span>
<span class="t" style="left:989.0px;top:1034.6px;line-height:20px;font-size:15.5px;font-weight:400;color:#5a5a5a;letter-spacing:0.234px;">Stop sharing</span>
<span class="t" style="left:1109.2px;top:1034.2px;line-height:20px;font-size:15.5px;font-weight:400;color:#2a5bd7;transform-origin:0 50%;transform:scaleX(0.9031);">Hide</span>
<span class="t" style="left:127.6px;top:997.6px;line-height:22px;font-size:17px;font-weight:400;color:#34343e;letter-spacing:0.038px;">03:57</span>
</body>
</html>
